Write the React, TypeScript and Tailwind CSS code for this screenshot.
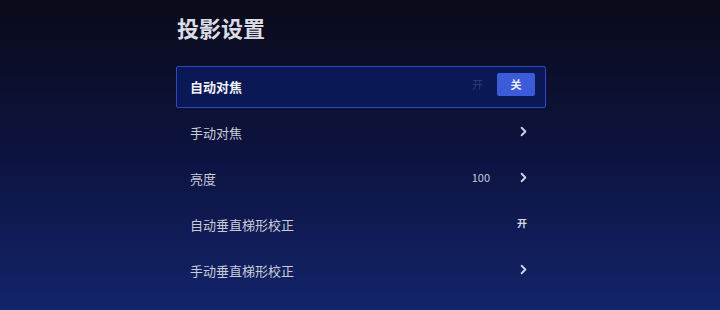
import { ChevronRight } from 'lucide-react'

type Row = { label: string; value?: string; chevron?: boolean; toggle?: 'on' | 'off' }

const rows: Row[] = [
  { label: '手动对焦', chevron: true },
  { label: '亮度', value: '100', chevron: true },
  { label: '自动垂直梯形校正', toggle: 'on' },
  { label: '手动垂直梯形校正', chevron: true },
]

function Chevron() {
  return <ChevronRight className="w-[15px] h-[15px] text-[#cdd3e4] -mt-[4px] -mr-[3px]" strokeWidth={3} />
}

export default function App() {
  return (
    <div
      className="w-[720px] h-[310px] overflow-hidden bg-linear-to-b from-[#0a0a1a] via-[#0d1340] via-50% to-[#12246a]"
      style={{ fontFamily: '"Noto Sans CJK SC", "Noto Sans", sans-serif' }}
    >
      <div className="ml-[176px] w-[370px] flex flex-col">
        <h1 className="pt-[14px] text-[22px] leading-[26px] font-bold text-[#dcdde4] pl-[1px]">投影设置</h1>

        <div className="mt-[26px] flex flex-col gap-[4px]">
          {/* focused row */}
          <div className="h-[42px] flex items-center border-[1.5px] border-[#2b4ac4] bg-[#0a1856] rounded-[2px] pl-[13px] pr-[10px]">
            <span className="text-[13px] font-bold text-[#f0f2f8] flex-1">自动对焦</span>
            <span className="text-[11px] text-[#2f3f74] mr-[14px] -mt-[5px]">开</span>
            <span className="w-[38px] h-[23px] -mt-[5px] rounded-[2px] bg-[#3b5bd9] flex items-center justify-center text-[11px] font-bold text-[#eef1ff]">
              关
            </span>
          </div>

          {rows.map((r) => (
            <div key={r.label} className="h-[42px] flex items-center pl-[14px] pr-[18px]">
              <span className="text-[13px] text-[#c9ccd8] flex-1">{r.label}</span>
              {r.value && <span className="text-[11px] text-[#c6cad8] mr-[26px] -mt-[4px]">{r.value}</span>}
              {r.chevron && <Chevron />}
              {r.toggle && <span className="text-[10px] font-bold text-[#d4d8e4] -mt-[6px] mr-[1px]">开</span>}
            </div>
          ))}
        </div>
      </div>
    </div>
  )
}
